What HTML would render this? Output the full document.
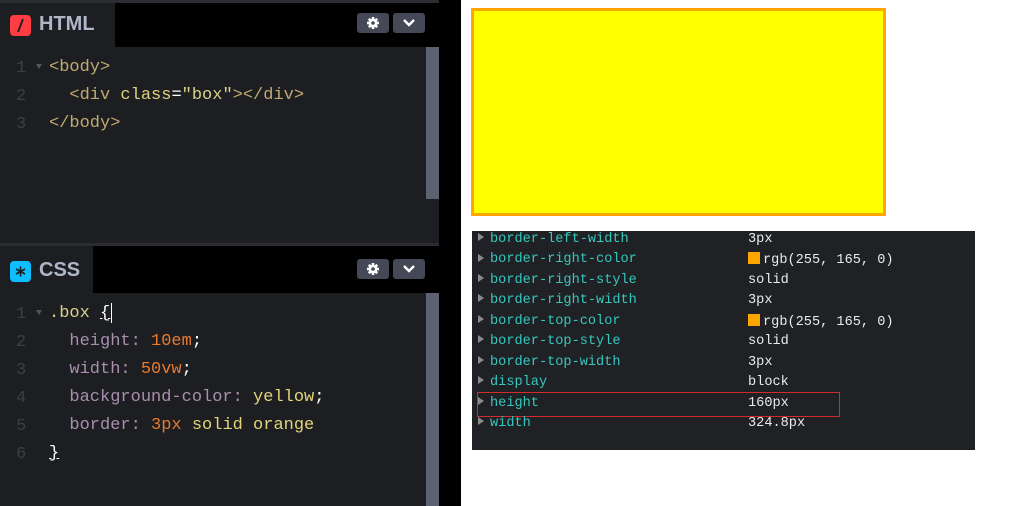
<!DOCTYPE html>
<html><head><style>
*{margin:0;padding:0;box-sizing:border-box}
body{width:1010px;height:506px;background:#fff;position:relative;overflow:hidden;font-family:"Liberation Mono",monospace}
.a{position:absolute}
.mono{font-family:"Liberation Mono",monospace}
.ln{color:#3d3f47;font-size:17px;position:absolute;left:16px}
.code{position:absolute;left:49px;font-size:17px;white-space:pre;color:#c1aa6f}
.btn{position:absolute;width:32px;height:20px;background:#444857;border-radius:3px;color:#fff;text-align:center}
.btn svg{position:absolute;left:9px;top:3px}
.row{position:absolute;left:490px;font-size:13.6px;color:#35c8bf;white-space:pre;margin-top:2px}
.val{position:absolute;left:748px;font-size:13.6px;color:#e8eaed;white-space:pre;margin-top:2px}
.tri{position:absolute;left:478px;width:0;height:0;border-left:6px solid #8a8c90;border-top:4px solid transparent;border-bottom:4px solid transparent}
.sw{display:inline-block;width:12px;height:12px;background:#ffa500;vertical-align:-1px;margin-right:3px}
</style></head><body>
<svg width="0" height="0" style="position:absolute"><defs>
<g id="gear"><circle cx="7" cy="7" r="4.3" fill="#fff"/><g stroke="#fff" stroke-width="2.6"><line x1="7" y1="1" x2="7" y2="13"/><line x1="1" y1="7" x2="13" y2="7"/><line x1="2.8" y1="2.8" x2="11.2" y2="11.2"/><line x1="11.2" y1="2.8" x2="2.8" y2="11.2"/></g><circle cx="7" cy="7" r="1.8" fill="#444857"/></g>
</defs></svg>
<div class="a" style="left:0;top:0;width:461px;height:506px;background:#000"></div>
<div class="a" style="left:0;top:0;width:439px;height:3px;background:#2c2d33"></div>
<div class="a" style="left:0;top:3px;width:115px;height:44px;background:#1d1e22"></div>
<div class="a" style="left:10px;top:15px;width:21px;height:21px;background:#ff3c41;border-radius:4px"><svg width="21" height="21"><line x1="13" y1="4" x2="8" y2="17" stroke="#1d1e22" stroke-width="1.8"/></svg></div>
<div class="a" style="left:39px;top:13px;font-family:'Liberation Sans',sans-serif;font-weight:bold;font-size:20px;color:#aeb6c8">HTML</div>
<div class="btn" style="left:357px;top:13px"><svg width="14" height="14"><use href="#gear"/></svg></div>
<div class="btn" style="left:393px;top:13px"><svg width="14" height="14"><polyline points="2,4 7,9 12,4" fill="none" stroke="#fff" stroke-width="2.4"/></svg></div>
<div class="a" style="left:0;top:47px;width:439px;height:196px;background:#1d1e22"></div>
<div class="a" style="left:426px;top:47px;width:13px;height:152px;background:#5d6273"></div>
<div class="ln mono" style="top:59px">1</div><div class="ln mono" style="top:87px">2</div><div class="ln mono" style="top:115px">3</div>
<div class="a" style="left:36px;top:64px;border-top:5px solid #555;border-left:3px solid transparent;border-right:3px solid transparent"></div>
<div class="code mono" style="top:58px">&lt;body&gt;</div>
<div class="code mono" style="top:86px">  &lt;div <span style="color:#dfd280">class</span><span style="color:#fff">=</span><span style="color:#d9d089">"box"</span>&gt;&lt;/div&gt;</div>
<div class="code mono" style="top:114px">&lt;/body&gt;</div>
<div class="a" style="left:0;top:243px;width:439px;height:3px;background:#2c2d33"></div>
<div class="a" style="left:0;top:246px;width:93px;height:47px;background:#1d1e22"></div>
<div class="a" style="left:10px;top:261px;width:21px;height:21px;background:#0ebeff;border-radius:4px"><svg width="21" height="21"><g stroke="#1d1e22" stroke-width="1.6"><line x1="10.5" y1="5.5" x2="10.5" y2="15.5"/><line x1="6" y1="8" x2="15" y2="13"/><line x1="6" y1="13" x2="15" y2="8"/></g></svg></div>
<div class="a" style="left:39px;top:259px;font-family:'Liberation Sans',sans-serif;font-weight:bold;font-size:20px;color:#aeb6c8">CSS</div>
<div class="btn" style="left:357px;top:259px"><svg width="14" height="14"><use href="#gear"/></svg></div>
<div class="btn" style="left:393px;top:259px"><svg width="14" height="14"><polyline points="2,4 7,9 12,4" fill="none" stroke="#fff" stroke-width="2.4"/></svg></div>
<div class="a" style="left:0;top:293px;width:439px;height:213px;background:#1d1e22"></div>
<div class="a" style="left:426px;top:293px;width:13px;height:213px;background:#5d6273"></div>
<div class="ln mono" style="top:305px">1</div><div class="ln mono" style="top:333px">2</div><div class="ln mono" style="top:361px">3</div><div class="ln mono" style="top:389px">4</div><div class="ln mono" style="top:417px">5</div><div class="ln mono" style="top:445px">6</div>
<div class="a" style="left:36px;top:310px;border-top:5px solid #555;border-left:3px solid transparent;border-right:3px solid transparent"></div>
<div class="code mono" style="top:304px;color:#d9d089">.box <span style="color:#fff;text-decoration:underline">{</span></div>
<div class="a" style="left:111px;top:303px;width:1px;height:20px;background:#fff"></div>
<div class="code mono" style="top:332px;color:#a88fae">  height: <span style="color:#e67a2e">10em</span><span style="color:#fff">;</span></div>
<div class="code mono" style="top:360px;color:#a88fae">  width: <span style="color:#e67a2e">50vw</span><span style="color:#fff">;</span></div>
<div class="code mono" style="top:388px;color:#a88fae">  background-color: <span style="color:#e4d47a">yellow</span><span style="color:#fff">;</span></div>
<div class="code mono" style="top:416px;color:#a88fae">  border: <span style="color:#e67a2e">3px</span> <span style="color:#e4d47a">solid orange</span></div>
<div class="code mono" style="top:444px;color:#fff;text-decoration:underline">}</div>
<div class="a" style="left:471px;top:8px;width:415px;height:208px;background:#ff0;border:3px solid #ffa500"></div>
<div class="a" style="left:472px;top:231px;width:503px;height:219px;background:#202124"></div>
<div class="a" style="left:477px;top:392px;width:363px;height:25px;border:1px solid #d32b2b"></div>
<div class="tri" style="top:233px"></div><div class="row" style="top:230px">border-left-width</div><div class="val" style="top:230px">3px</div>
<div class="tri" style="top:254px"></div><div class="row" style="top:250px">border-right-color</div><div class="val" style="top:250px"><span class="sw"></span>rgb(255, 165, 0)</div>
<div class="tri" style="top:274px"></div><div class="row" style="top:271px">border-right-style</div><div class="val" style="top:271px">solid</div>
<div class="tri" style="top:294px"></div><div class="row" style="top:291px">border-right-width</div><div class="val" style="top:291px">3px</div>
<div class="tri" style="top:315px"></div><div class="row" style="top:312px">border-top-color</div><div class="val" style="top:312px"><span class="sw"></span>rgb(255, 165, 0)</div>
<div class="tri" style="top:335px"></div><div class="row" style="top:332px">border-top-style</div><div class="val" style="top:332px">solid</div>
<div class="tri" style="top:356px"></div><div class="row" style="top:353px">border-top-width</div><div class="val" style="top:353px">3px</div>
<div class="tri" style="top:376px"></div><div class="row" style="top:373px">display</div><div class="val" style="top:373px">block</div>
<div class="tri" style="top:397px"></div><div class="row" style="top:394px">height</div><div class="val" style="top:394px">160px</div>
<div class="tri" style="top:417px"></div><div class="row" style="top:414px">width</div><div class="val" style="top:414px">324.8px</div>
</body></html>
